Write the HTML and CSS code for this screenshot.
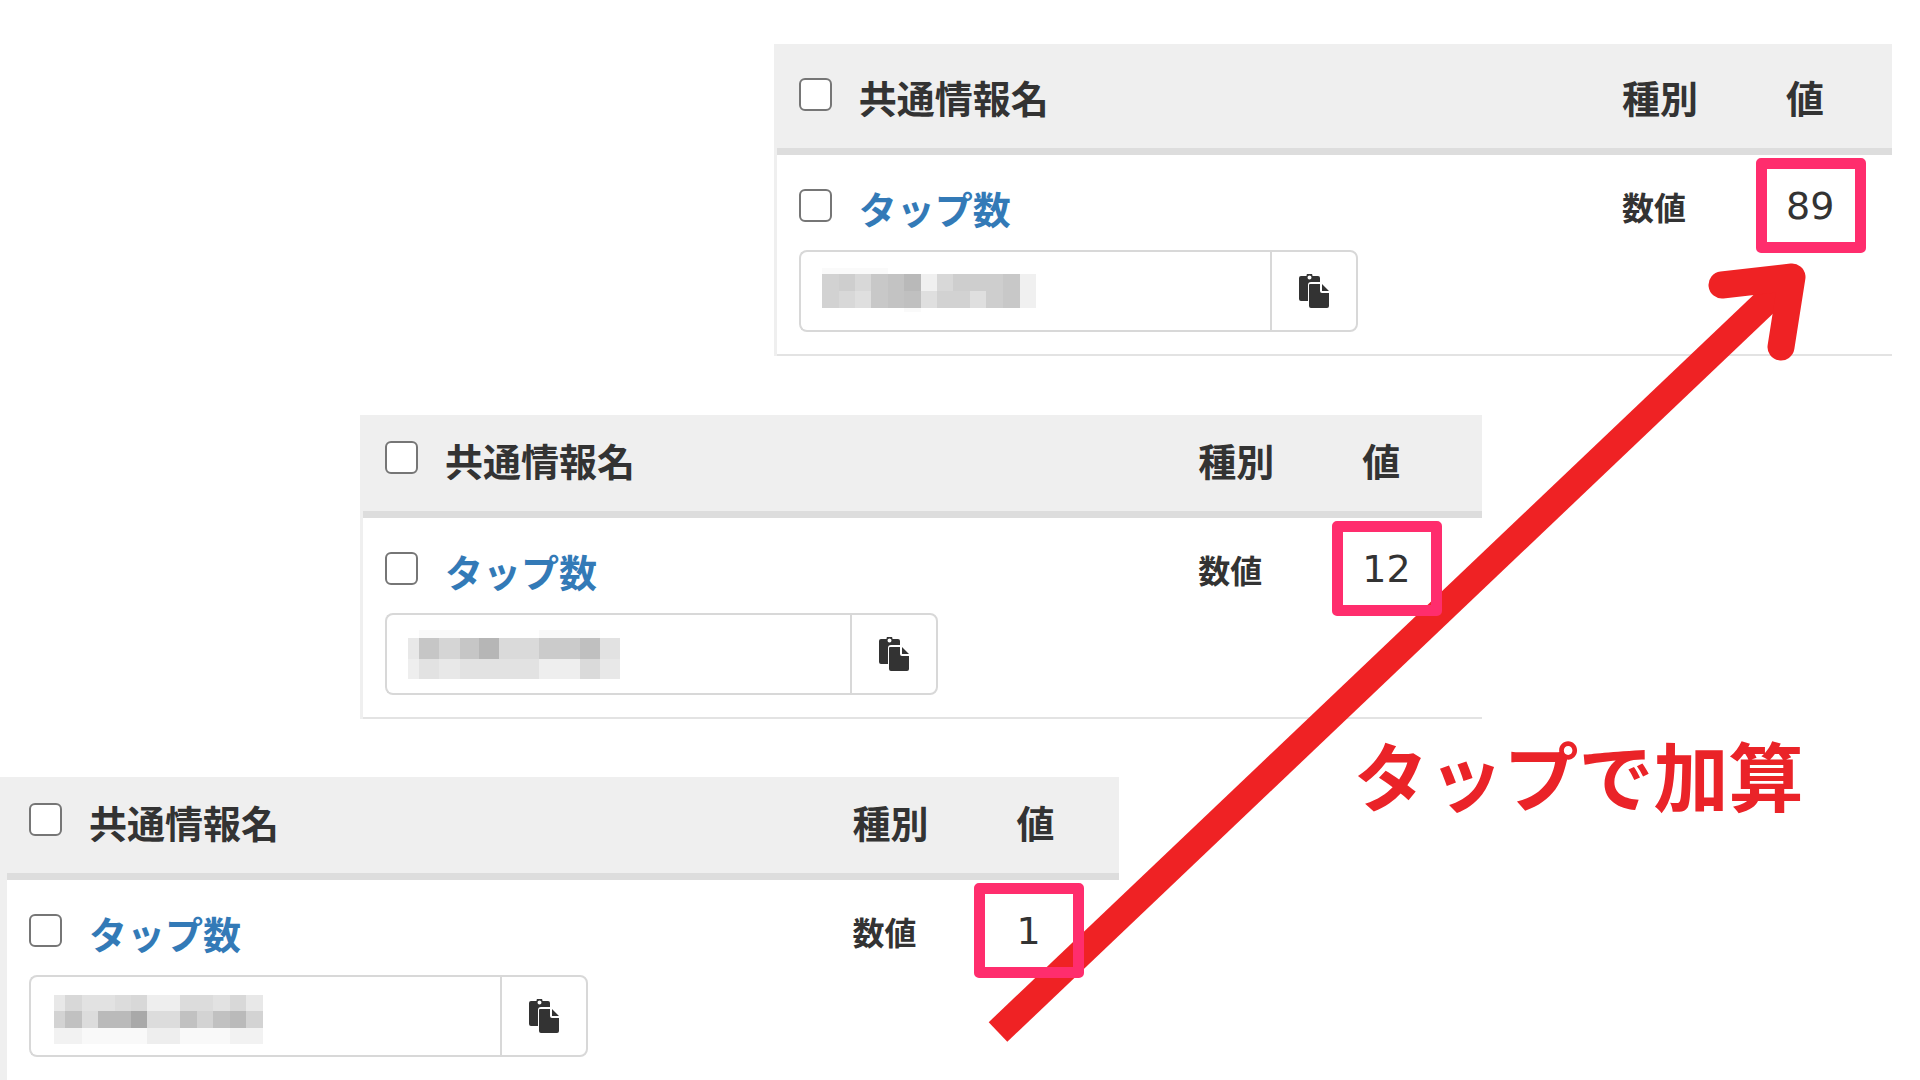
FILE: index.html
```
<!DOCTYPE html>
<html lang="ja">
<head>
  <meta charset="UTF-8">
  <meta name="viewport" content="width=device-width, initial-scale=1.0">
  <title>タップで加算</title>
  <link rel="stylesheet" href="styles.css">
</head>
<body>
  <svg class="symbols" aria-hidden="true">
    <symbol id="icon-paste" viewBox="0 0 30 34">
      <path fill="#333" fill-rule="evenodd" d="M2 2h5.500a3 3 0 0 1 6 0h5.500q2 0 2 2v4h-9q-3 0-3 3v16H2q-2 0-2-2V4q0-2 2-2zM10.500 1.500a1.500 1.500 0 1 0 0 4a1.500 1.500 0 0 0 0-4z"/>
      <path fill="#333" d="M11 10h10v7q0 2 2 2h7v13q0 2-2 2H12q-2 0-2-2V11q0-1 1-1zM23 10l7 7h-7z"/>
    </symbol>
  </svg>

  <main class="canvas">
    <section class="card card-last">
      <table class="info-table">
        <thead>
          <tr>
            <th class="name-col">
              <label class="check-row"><input type="checkbox" class="check"> 共通情報名</label>
            </th>
            <th class="type-col">種別</th>
            <th class="value-col">値</th>
          </tr>
        </thead>
        <tbody>
          <tr>
            <td>
              <div class="check-row">
                <input type="checkbox" class="check" aria-label="タップ数">
                <a href="#">タップ数</a>
              </div>
              <div class="code-group">
                <input type="text" class="code" aria-label="コード" readonly>
                <button type="button" class="copy" aria-label="コピー"><svg class="icon"><use href="#icon-paste"/></svg></button>
                <svg class="mosaic" viewBox="0 0 260 82" shape-rendering="crispEdges" aria-hidden="true">
                  <path fill="#fafafa" d="M23 18h66v6H23zM105 58h17v4h-17z"/>
                  <path fill="#d2d2d2" d="M23 24h17v34H23zM138 41h33v17h-33z"/>
                  <path fill="#cecece" d="M40 24h16v17H40zM154 24h50v17h-50zM187 41h17v17h-17z"/>
                  <path fill="#d8d8d8" d="M56 24h16v17H56zM40 41h16v17H40zM138 24h16v17h-16z"/>
                  <path fill="#dfdfdf" d="M56 41h16v17H56zM122 41h16v17h-16zM171 41h16v17h-16z"/>
                  <path fill="#c8c8c8" d="M72 24h17v34H72zM204 24h17v34h-17z"/>
                  <path fill="#c3c3c3" d="M89 24h16v34H89z"/>
                  <path fill="#b9b9b9" d="M105 24h17v17h-17z"/>
                  <path fill="#c0c0c0" d="M105 41h17v17h-17z"/>
                  <path fill="#f0f0f0" d="M122 24h16v17h-16zM221 24h16v34h-16z"/>
                </svg>
              </div>
            </td>
            <td class="type">数値</td>
            <td class="value"><span class="marked">89</span></td>
          </tr>
        </tbody>
      </table>
    </section>

    <section class="card card-middle">
      <table class="info-table">
        <thead>
          <tr>
            <th class="name-col">
              <label class="check-row"><input type="checkbox" class="check"> 共通情報名</label>
            </th>
            <th class="type-col">種別</th>
            <th class="value-col">値</th>
          </tr>
        </thead>
        <tbody>
          <tr>
            <td>
              <div class="check-row">
                <input type="checkbox" class="check" aria-label="タップ数">
                <a href="#">タップ数</a>
              </div>
              <div class="code-group">
                <input type="text" class="code" aria-label="コード" readonly>
                <button type="button" class="copy" aria-label="コピー"><svg class="icon"><use href="#icon-paste"/></svg></button>
                <svg class="mosaic" viewBox="0 0 260 82" shape-rendering="crispEdges" aria-hidden="true">
                  <path fill="#f9f9f9" d="M34 17h41v8H34zM154 17h61v8h-61z"/>
                  <path fill="#e8e8e8" d="M23 25h11v21H23zM54 46h21v20H54zM215 46h20v20h-20z"/>
                  <path fill="#eeeeee" d="M23 46h11v20H23zM154 46h41v20h-41z"/>
                  <path fill="#c6c6c6" d="M34 25h20v21H34zM75 25h19v21H75z"/>
                  <path fill="#d5d5d5" d="M54 25h21v21H54z"/>
                  <path fill="#b6b6b6" d="M94 25h20v21H94z"/>
                  <path fill="#dadada" d="M114 25h40v21h-40zM195 46h20v20h-20z"/>
                  <path fill="#cbcbcb" d="M154 25h41v21h-41z"/>
                  <path fill="#c0c0c0" d="M195 25h20v21h-20z"/>
                  <path fill="#e2e2e2" d="M215 25h20v21h-20zM34 46h20v20H34zM75 46h79v20H75z"/>
                </svg>
              </div>
            </td>
            <td class="type">数値</td>
            <td class="value"><span class="marked">12</span></td>
          </tr>
        </tbody>
      </table>
    </section>

    <section class="card card-first">
      <table class="info-table">
        <thead>
          <tr>
            <th class="name-col">
              <label class="check-row"><input type="checkbox" class="check"> 共通情報名</label>
            </th>
            <th class="type-col">種別</th>
            <th class="value-col">値</th>
          </tr>
        </thead>
        <tbody>
          <tr>
            <td>
              <div class="check-row">
                <input type="checkbox" class="check" aria-label="タップ数">
                <a href="#">タップ数</a>
              </div>
              <div class="code-group">
                <input type="text" class="code" aria-label="コード" readonly>
                <button type="button" class="copy" aria-label="コピー"><svg class="icon"><use href="#icon-paste"/></svg></button>
                <svg class="mosaic" viewBox="0 0 260 82" shape-rendering="crispEdges" aria-hidden="true">
                  <path fill="#e8e8e8" d="M25 20h11v16H25zM217 20h17v16h-17z"/>
                  <path fill="#d8d8d8" d="M36 20h17v16H36zM102 20h16v16h-16zM201 20h16v16h-16z"/>
                  <path fill="#e2e2e2" d="M53 20h33v16H53zM184 20h17v16h-17z"/>
                  <path fill="#dcdcdc" d="M86 20h16v16H86zM151 20h33v16h-33zM53 36h16v17H53zM118 36h33v17h-33z"/>
                  <path fill="#eeeeee" d="M118 20h33v16h-33zM118 53h33v16h-33z"/>
                  <path fill="#d3d3d3" d="M25 36h11v17H25zM168 36h16v17h-16zM217 36h17v17h-17z"/>
                  <path fill="#c1c1c1" d="M36 36h17v17H36zM151 36h17v17h-17zM184 36h17v17h-17z"/>
                  <path fill="#bababa" d="M69 36h33v17H69zM201 36h16v17h-16z"/>
                  <path fill="#a9a9a9" d="M102 36h16v17h-16z"/>
                  <path fill="#f2f2f2" d="M25 53h28v16H25zM201 53h33v16h-33z"/>
                  <path fill="#f9f9f9" d="M53 53h65v16H53zM151 53h50v16h-50z"/>
                </svg>
              </div>
            </td>
            <td class="type">数値</td>
            <td class="value"><span class="marked">1</span></td>
          </tr>
        </tbody>
      </table>
    </section>

    <svg class="arrow" viewBox="0 0 1920 1080" aria-hidden="true">
      <path d="M998 1032L1792 277"/>
      <path class="arrow-head" d="M1722 285L1792 277L1781 347"/>
    </svg>

    <p class="caption">タップで加算</p>
  </main>
</body>
</html>
```
FILE: styles.css
```
*,
*::after {
  box-sizing: border-box;
}

body {
  margin: 0;
  background-color: #fff;
  color: #333;
  font-family: "Noto Sans CJK JP", sans-serif;
}

.symbols {
  display: none;
}

.canvas {
  position: relative;
  display: flex;
  flex-direction: column;
  min-height: 100vh;
  overflow: hidden;
}

/* cards climb from bottom left to top right */
.card {
  border-left: 3px solid #efefef;
}

.card-last {
  --head-top: 31px;
  --value-width: 106px;
  --code-width: 559px;
  margin: 44px 28px 0 40.3%;
}

.card-middle {
  --head-top: 23px;
  --value-width: 120px;
  --code-width: 553px;
  margin: 59px 22.8% 0 18.75%;
}

.card-first {
  --head-top: 23px;
  --value-width: 103px;
  --code-width: 559px;
  flex: 1;
  margin: 58px 41.7% 0 0;
  border-left-width: 7px;
}

.info-table {
  width: 100%;
  table-layout: fixed;
  border-collapse: separate;
  border-spacing: 0;
  font-size: 38px;
  line-height: 44px;
}

th,
td {
  padding: 0;
  text-align: left;
  vertical-align: top;
}

th {
  padding: var(--head-top) 0 29px;
  background-color: #efefef;
  border-bottom: 7px solid #ddd;
  font-weight: 700;
}

td {
  padding: 31px 0 22px;
  border-bottom: 2px solid #e3e3e3;
}

.card-first td {
  border-bottom: none;
}

.name-col,
.info-table td:first-child {
  padding-left: 22px;
}

.type-col {
  width: 164px;
}

.value-col {
  width: var(--value-width);
}

.check-row {
  display: flex;
  align-items: flex-start;
  gap: 27px;
  font-weight: 700;
}

.check {
  appearance: none;
  flex: none;
  width: 33px;
  height: 33px;
  margin: 3px 0 0;
  background-color: #fff;
  border: 2px solid #767676;
  border-radius: 6px;
}

a {
  color: #337ab7;
  text-decoration: none;
}

.type {
  font-size: 32px;
  font-weight: 700;
  line-height: 40px;
}

.value {
  font-family: "DejaVu Sans", sans-serif;
  line-height: 40px;
}

.code-group {
  position: relative;
  display: flex;
  width: var(--code-width);
  height: 82px;
  margin-top: 20px;
}

.code {
  flex: 1;
  min-width: 0;
  padding: 0 22px;
  background-color: #fff;
  border: 2px solid #d8d8d8;
  border-right: none;
  border-radius: 8px 0 0 8px;
  font-size: 32px;
}

.copy {
  display: flex;
  align-items: center;
  justify-content: center;
  width: 88px;
  padding: 0;
  background-color: #fff;
  border: 2px solid #d8d8d8;
  border-radius: 0 8px 8px 0;
}

.icon {
  width: 30px;
  height: 34px;
}

.mosaic {
  position: absolute;
  top: 0;
  left: 0;
  width: 260px;
  height: 82px;
  pointer-events: none;
}

/* pink frame round the counter */
.marked {
  position: relative;
}

.marked::after {
  content: "";
  position: absolute;
  z-index: 2;
  top: 50%;
  left: 50%;
  width: 110px;
  height: 95px;
  margin: -48px 0 0 -54px;
  border: 11px solid #ff2d6d;
  border-radius: 5px;
}

.arrow {
  position: absolute;
  z-index: 1;
  top: 0;
  left: 0;
  width: 100%;
  fill: none;
  stroke: #ef2224;
  stroke-width: 27px;
  pointer-events: none;
}

.arrow-head {
  stroke-linecap: round;
  stroke-linejoin: round;
}

.caption {
  position: absolute;
  top: 736px;
  left: 70.5%;
  margin: 0;
  color: #ea2328;
  font-size: 75px;
  font-weight: 700;
  line-height: 76px;
  white-space: nowrap;
}
```
